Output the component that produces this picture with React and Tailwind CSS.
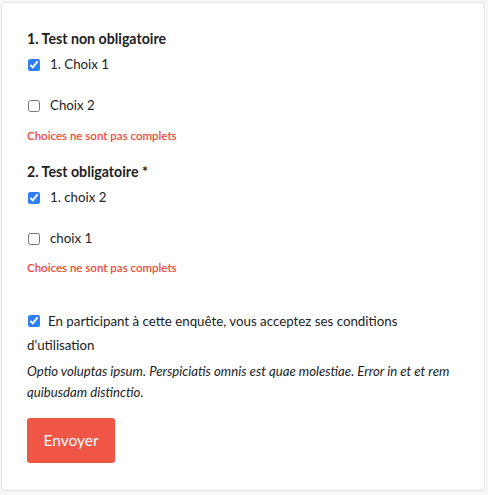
export default function App() {
  const font = { fontFamily: "Lato, 'Noto Sans', sans-serif" };
  return (
    <div className="min-h-screen w-full bg-[#f7f7f7] pt-[2px] pl-[1px]" style={font}>
      {/* Card */}
      <div className="w-[484px] h-[489px] bg-white border border-[#e3e3e3] rounded-[4px] px-[25px] pt-[26px] text-[#222]">
        <Question
          title="1. Test non obligatoire"
          errTop="mt-[12px]"
          options={[
            { label: "1. Choix 1", checked: true },
            { label: "Choix 2", checked: false },
          ]}
        />
        <div className="mt-[18px]">
          <Question
            title="2. Test obligatoire *"
            errTop="mt-[11px]"
            options={[
              { label: "1. choix 2", checked: true },
              { label: "choix 1", checked: false },
            ]}
          />
        </div>

        {/* Conditions */}
        <p className="mt-[33px] text-[13.3px] leading-[24px]">
          <input type="checkbox" defaultChecked className="w-[12px] h-[12px] align-[-1px] ml-[1px] mr-[8px] accent-[#2f80f8]" />
          En participant à cette enquête, vous acceptez ses conditions d'utilisation
        </p>
        <p className="mt-[4px] text-[13.2px] leading-[21px] italic">
          Optio voluptas ipsum. Perspiciatis omnis est quae molestiae. Error in et et rem quibusdam distinctio.
        </p>

        <button className="mt-[15px] w-[88px] h-[45px] rounded-[3px] bg-[#ef5646] text-white text-[15.5px]">
          Envoyer
        </button>
      </div>
    </div>
  );
}

function Question({ title, options, errTop }) {
  return (
    <div>
      <h3 className="text-[14.2px] font-bold leading-[20px]">{title}</h3>
      <div className="mt-[6px] flex flex-col gap-[21px]">
        {options.map((o) => (
          <label key={o.label} className="h-[20px] flex items-center text-[13.3px]">
            <input type="checkbox" defaultChecked={o.checked} className="w-[12px] h-[12px] m-0 ml-[1px] mr-[10px] accent-[#2f80f8]" />
            {o.label}
          </label>
        ))}
      </div>
      <p className={errTop + " text-[11.5px] leading-[16px] font-semibold text-[#ef4b3a]"}>Choices ne sont pas complets</p>
    </div>
  );
}
